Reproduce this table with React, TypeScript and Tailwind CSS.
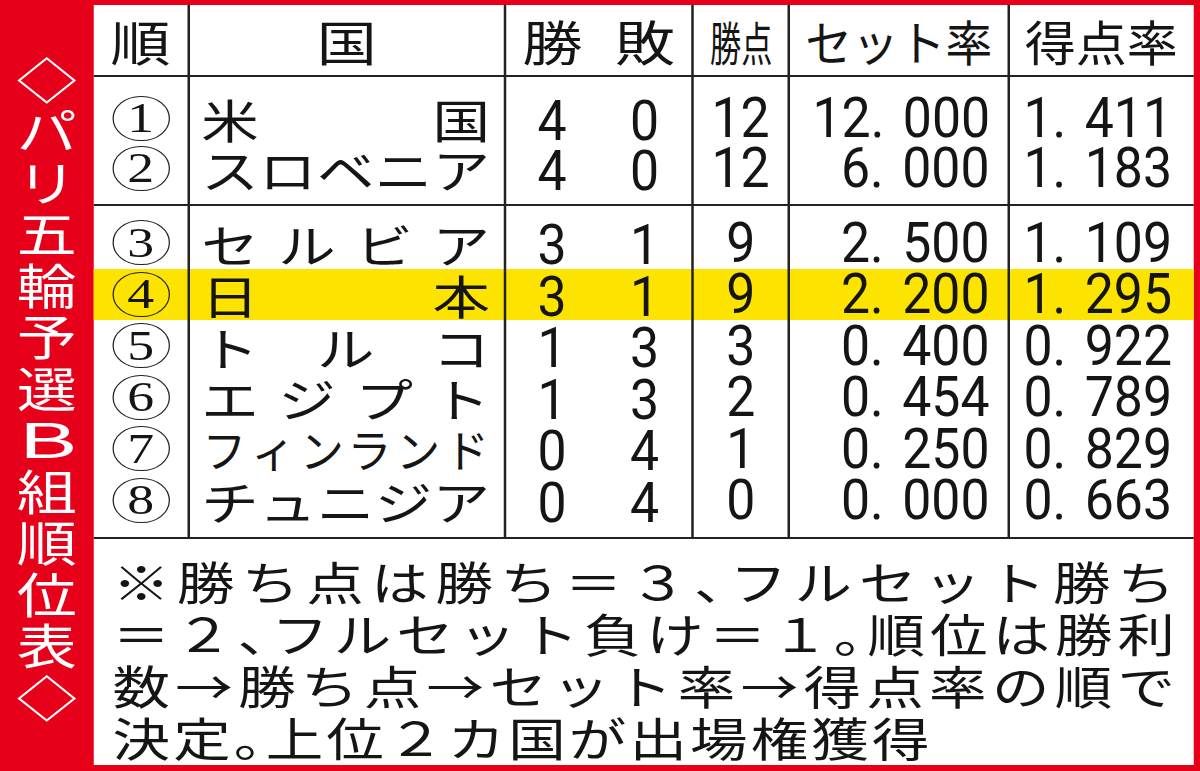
const TITLE = ['◇', 'パ', 'リ', '五', '輪', '予', '選', 'B', '組', '順', '位', '表', '◇'];

type Team = {
  rank: string;
  name: string;
  small?: boolean;
  w: string;
  l: string;
  pts: string;
  set: string;
  ratio: string;
  hl?: boolean;
};

const group1: Team[] = [
  { rank: '1', name: '米国', w: '4', l: '0', pts: '12', set: '12.000', ratio: '1.411' },
  { rank: '2', name: 'スロベニア', w: '4', l: '0', pts: '12', set: '6.000', ratio: '1.183' },
];

const group2: Team[] = [
  { rank: '3', name: 'セルビア', w: '3', l: '1', pts: '9', set: '2.500', ratio: '1.109' },
  { rank: '4', name: '日本', w: '3', l: '1', pts: '9', set: '2.200', ratio: '1.295', hl: true },
  { rank: '5', name: 'トルコ', w: '1', l: '3', pts: '3', set: '0.400', ratio: '0.922' },
  { rank: '6', name: 'エジプト', w: '1', l: '3', pts: '2', set: '0.454', ratio: '0.789' },
  { rank: '7', name: 'フィンランド', small: true, w: '0', l: '4', pts: '1', set: '0.250', ratio: '0.829' },
  { rank: '8', name: 'チュニジア', w: '0', l: '4', pts: '0', set: '0.000', ratio: '0.663' },
];

const grid = 'grid grid-cols-[77px_253px_150px_77px_176px_minmax(0,1fr)]';
const line = 'border-r-2 border-[#222]';

function Num({ children, origin = 'origin-center' }: { children: string; origin?: string }) {
  // newspaper style: a little air after the decimal point
  const [a, b] = children.split('.');
  return (
    <span className={`inline-block shrink-0 whitespace-pre text-[56px] leading-none [font-family:Roboto,'Liberation_Sans',sans-serif] scale-x-[0.74] ${origin}`}>
      {b === undefined ? (
        a
      ) : (
        <>
          {a}.<span className="ml-[20px]">{b}</span>
        </>
      )}
    </span>
  );
}

function TeamRow({ t, cell, last }: { t: Team; cell: string; last?: boolean }) {
  return (
    <div className={`${grid} ${t.hl ? 'bg-[#fde400]' : ''} ${last ? 'border-b-2 border-[#222]' : ''}`}>
      <div className={`flex items-center justify-center ${line} ${cell}`}>
        <span className="flex h-[45px] w-[46px] items-center justify-center rounded-full border border-[#222] pb-[1px] text-[43px] leading-none [font-family:'Liberation_Serif',serif]">
          {t.rank}
        </span>
      </div>
      <div className={`flex min-w-0 items-center justify-between pl-[9px] pr-[11px] ${line} ${cell}`}>
        {Array.from(t.name).map((c, i) =>
          t.small ? (
            <span key={i} className="flex w-[37px] justify-center">
              <span className="inline-block scale-x-[0.78] text-[45px] leading-none">{c}</span>
            </span>
          ) : (
            <span key={i} className="text-[46px] leading-none">
              {c}
            </span>
          ),
        )}
      </div>
      <div className={`grid grid-cols-2 ${line} ${cell}`}>
        <div className="flex items-center justify-center">
          <Num>{t.w}</Num>
        </div>
        <div className="flex items-center justify-center">
          <Num>{t.l}</Num>
        </div>
      </div>
      <div className={`flex items-center justify-center ${line} ${cell}`}>
        <Num>{t.pts}</Num>
      </div>
      <div className={`flex min-w-0 items-center justify-end pr-[14px] ${line} ${cell}`}>
        <Num origin="origin-right">{t.set}</Num>
      </div>
      <div className={`flex min-w-0 items-center justify-end pr-[17px] ${cell}`}>
        <Num origin="origin-right">{t.ratio}</Num>
      </div>
    </div>
  );
}

export default function App() {
  return (
    <div className="h-[771px] w-[1200px] overflow-hidden bg-[#e60019] text-[#151515] [font-family:'Noto_Sans_CJK_JP','Noto_Sans',sans-serif]">
      <div className="flex h-full w-[960px] origin-top-left scale-x-[1.25] pb-[6px] pr-[5px] pt-[5px]">
        {/* vertical title */}
        <div className="flex w-[75px] shrink-0 flex-col items-center pt-[46px] text-white">
          {TITLE.map((c, i) => (
            <span key={i} className="flex h-[51.5px] shrink-0 items-center justify-center text-[48px] leading-none">
              <span className={c === 'B' ? 'inline-block scale-x-[1.5]' : ''}>{c}</span>
            </span>
          ))}
        </div>

        <div className="flex min-w-0 flex-1 flex-col bg-white">
          {/* header */}
          <div className={`${grid} border-b-2 border-[#222]`}>
            <div className={`flex h-[70px] items-center justify-center text-[48px] leading-none ${line}`}>順</div>
            <div className={`flex h-[70px] items-center justify-center text-[48px] leading-none ${line}`}>国</div>
            <div className={`grid h-[70px] grid-cols-2 text-[48px] leading-none ${line}`}>
              <div className="flex items-center justify-center">勝</div>
              <div className="flex items-center justify-center">敗</div>
            </div>
            <div className={`flex h-[70px] items-center justify-center ${line}`}>
              <span className="inline-block scale-x-[0.53] whitespace-nowrap text-[47px] leading-none">勝点</span>
            </div>
            <div className={`flex h-[70px] items-center justify-center ${line}`}>
              <span className="inline-block scale-x-[0.78] whitespace-nowrap text-[48px] leading-none">セット率</span>
            </div>
            <div className="flex h-[70px] items-center justify-center">
              <span className="inline-block scale-x-[0.85] whitespace-nowrap text-[48px] leading-none">得点率</span>
            </div>
          </div>

          {/* top two */}
          <TeamRow t={group1[0]} cell="h-[66px] pt-[16px]" />
          <TeamRow t={group1[1]} cell="h-[61px] pb-[11px]" last />

          {/* the rest */}
          {group2.map((t, i) => (
            <TeamRow
              key={t.rank}
              t={t}
              cell={i === 0 ? 'h-[62.5px] pt-[11px]' : i === group2.length - 1 ? 'h-[62.5px] pb-[11px]' : 'h-[51.5px]'}
              last={i === group2.length - 1}
            />
          ))}

          {/* note */}
          <div className="flex-1 px-[15px] pt-[15px] text-[46px] leading-[52px]">
            <div className="text-justify [text-align-last:justify]">
              ※勝ち点は勝ち＝３<span className="[font-feature-settings:'halt']">、</span>フルセット勝ち
            </div>
            <div className="text-justify [text-align-last:justify]">
              ＝２<span className="[font-feature-settings:'halt']">、</span>フルセット負け＝１<span className="[font-feature-settings:'halt']">。</span>順位は勝利
            </div>
            <div className="text-justify [text-align-last:justify]">数→勝ち点→セット率→得点率の順で</div>
            <div className="tracking-[2.5px]">
              決定<span className="[font-feature-settings:'halt']">。</span>上位２カ国が出場権獲得
            </div>
          </div>
        </div>
      </div>
    </div>
  );
}
